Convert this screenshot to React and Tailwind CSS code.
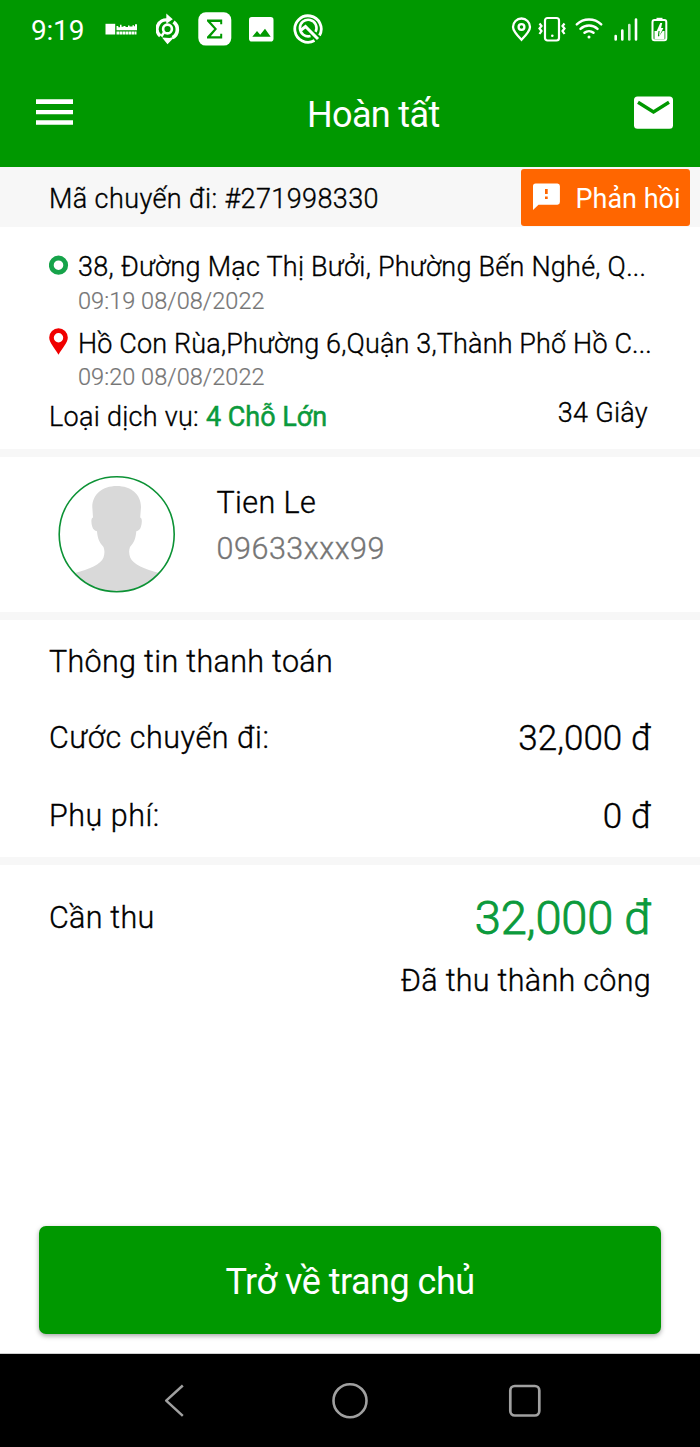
function StatusBar() {
  return (
    <div className="flex h-[60px] items-start justify-between text-white">
      <div className="flex items-start">
        <span className="ml-[31px] w-[74px] text-[28px] leading-[61px] tracking-[-0.2px]">9:19</span>
        <svg className="mt-[22px] h-4 w-8" viewBox="0 0 32 16" fill="currentColor">
          <rect x="0.5" y="1.8" width="9.7" height="10.7" />
          <path d="M11.500 8.200V4h1.800v1.200h1.700V2.800h1.500v2h2V4h2v1h2.500V3.500h1.500v1h3V3.200h1.500v1H30V2.300h2v5.900z" />
          <path d="M11.500 11h20" stroke="currentColor" strokeWidth="3.200" strokeDasharray="2.600 .4" />
        </svg>
        <svg className="mt-[12px] ml-[19px] h-[34px] w-[24px]" viewBox="0 0 24 34" fill="none" stroke="currentColor">
          <path d="M4.200 24A9.200 9.200 0 0 1 11.500 8" strokeWidth="3.400" />
          <path d="M10.300 1.500l6.500 5.700-6.500 4.600z" fill="currentColor" stroke="none" />
          <path d="M17.500 10a9.200 9.200 0 0 1-1 15.600" strokeWidth="3.600" />
          <path d="M6 25.500l5.500 6.800 7.500-7.800-5.500 1.500z" fill="currentColor" stroke="none" />
          <circle cx="11.500" cy="17" r="4.400" strokeWidth="2.600" />
          <path d="M8.300 20l-3 4.500" strokeWidth="2.500" />
        </svg>
        <svg className="mt-[12px] ml-[18px] h-[34px] w-[34px]" viewBox="0 0 34 34">
          <rect x="0.300" y="0.300" width="33" height="33.300" rx="7.500" fill="currentColor" />
          <path d="M9 7.500h15.200v4.800h-2V9.900h-9.400l6.200 7.100-6.200 7.200h9.400v-2.400h2v4.800H9v-1.900l7.200-7.700L9 9.300z" fill="#009800" />
        </svg>
        <svg className="mt-[17px] ml-[17px] h-[25px] w-[25px]" viewBox="0 0 25 25">
          <rect width="24.500" height="24.500" rx="2.800" fill="currentColor" />
          <path d="M3.300 19.800l4.700-5.800 3.200 3.800 4.800-6 5.700 8z" fill="#009800" />
        </svg>
        <svg className="mt-[14px] ml-[19px] h-[30px] w-[30px]" viewBox="0 0 30 30" fill="none" stroke="currentColor">
          <path d="M21.500 26.500A13.200 13.200 0 1 1 26.500 21.500" strokeWidth="2.800" />
          <path d="M17.500 22A8.300 8.300 0 1 1 22.600 17.800" strokeWidth="2.600" />
          <path d="M7.500 16.500l5-4 12.500 12.500" strokeWidth="3" />
        </svg>
      </div>
      <div className="flex items-start pr-[32px]">
        <svg className="mt-[17px] h-[25px] w-[21px]" viewBox="0 0 21 25" fill="none" stroke="currentColor" strokeWidth="2.300">
          <path d="M10.500 22.800C5.800 18 2 14 2 10a8.500 8.500 0 0 1 17 0c0 4-3.800 8-8.500 12.800z" />
          <circle cx="10.500" cy="10" r="2.900" />
        </svg>
        <svg className="mt-[16px] ml-[6px] h-[26px] w-[28px]" viewBox="0 0 28 26" fill="none" stroke="currentColor" strokeWidth="2.200">
          <rect x="7" y="2" width="14" height="22.500" rx="2.500" />
          <path d="M1.500 7.500l2 2.500-2 2.500 2 2.500-2 3M26.500 7.500l-2 2.500 2 2.500-2 2.500 2 3" />
          <circle cx="14.300" cy="19.800" r="1.300" fill="currentColor" stroke="none" />
        </svg>
        <svg className="mt-[17px] ml-[9px] h-[23px] w-[28px]" viewBox="0 0 28 23" fill="none" stroke="currentColor" strokeWidth="2.500" strokeLinecap="round">
          <path d="M1.800 7.300a17.800 17.800 0 0 1 24.400 0M5.500 11.800a12.500 12.500 0 0 1 17 0M9.500 15.800a7 7 0 0 1 9 0" />
          <circle cx="14" cy="20" r="1.500" fill="currentColor" stroke="none" />
        </svg>
        <svg className="mt-[17px] ml-[11px] h-[25px] w-[24px]" viewBox="0 0 24 25" fill="none" stroke="currentColor" strokeWidth="2.600" strokeLinecap="round">
          <path d="M1.700 19v3.500M8.300 13.500v9M22 2.500v20" />
          <path d="M15.300 8v14.500" opacity=".8" />
        </svg>
        <svg className="mt-[17px] ml-[13px] h-[25px] w-[17px]" viewBox="0 0 17 25">
          <path d="M5.500 0.800h6v2h-6z" fill="currentColor" />
          <rect x="1.500" y="2.900" width="13.800" height="20.300" rx="2" fill="none" stroke="currentColor" strokeWidth="2" />
          <path d="M9.300 6h1.900l-1.100 5h2.300L8 19.500l.6-5.500H5.700z" fill="currentColor" />
          <path d="M3.500 14h4l-.6 5 1 .6 3.800-5.600h1.800v8h-10z" fill="currentColor" />
        </svg>
      </div>
    </div>
  );
}

function Header() {
  return (
    <div className="flex h-[107px] items-start text-white">
      <svg className="mt-[39px] ml-[36px] h-[27px] w-[37px]" viewBox="0 0 37 27" fill="currentColor">
        <path d="M0 0.200h37v4.800H0zM0 11h37v4.300H0zM0 21.300h37v4.400H0z" />
      </svg>
      <h1 className="ml-[234px] w-[327px] text-[36px] leading-[111px] tracking-[-0.65px]">Hoàn tất</h1>
      <svg className="mt-[36px] h-[33px] w-[39px]" viewBox="0 0 39 33">
        <rect y="0.500" width="39" height="32.300" rx="3.500" fill="currentColor" />
        <path d="M4 6.300L19.500 16 35 6.300" fill="none" stroke="#009800" strokeWidth="3.400" />
      </svg>
    </div>
  );
}

function TripBar() {
  return (
    <div className="flex h-[60px] items-start justify-between bg-[#f7f7f7] pr-[10px] pl-[49px]">
      <span className="text-[27px] leading-[65px] font-light tracking-[0.4px] [-webkit-text-stroke:0.35px]">
        Mã chuyến đi: #271998330
      </span>
      <button className="mt-[2px] flex h-[56.500px] w-[169px] items-start rounded-[3px] bg-[#ff6600] pl-[12px] text-white">
        <svg className="mt-[14px] h-[27px] w-[27px]" viewBox="0 0 27 27">
          <path d="M2.600 0.500h21.800a2.600 2.600 0 0 1 2.500 2.600v16a2.600 2.600 0 0 1-2.500 2.600H5.500L0 27V3.100A2.600 2.600 0 0 1 2.600 0.500z" fill="currentColor" />
          <path d="M12 6h2.700v5H12zM12 13.500h2.700V16H12z" fill="#ff6600" />
        </svg>
        <span className="ml-[15.500px] text-[27px] leading-[61px]">Phản hồi</span>
      </button>
    </div>
  );
}

function Stop({ icon, address, time, tracking }) {
  return (
    <div className="flex items-start">
      <div className="w-[29px] shrink-0">{icon}</div>
      <div className="font-light">
        <div className={`h-[38px] text-[27px] whitespace-nowrap [-webkit-text-stroke:0.35px] ${tracking}`}>
          {address}
        </div>
        <div className="h-[31px] text-[23.500px] leading-[31px] tracking-[0.05px] text-[#757575] [-webkit-text-stroke:0.2px]">
          {time}
        </div>
      </div>
    </div>
  );
}

function Divider() {
  return <div className="h-2 shrink-0 bg-[#f7f7f7]" />;
}

function Trip() {
  return (
    <section className="flex h-[222px] flex-col pt-[21px] pr-[52px] pl-[49px]">
      <Stop
        address="38, Đường Mạc Thị Bưởi, Phường Bến Nghé, Q..."
        time="09:19 08/08/2022"
        tracking="leading-[39px] tracking-[0.25px]"
        icon={
          <svg className="mt-[7px] h-5 w-5" viewBox="0 0 20 20">
            <circle cx="9.500" cy="10.200" r="7.200" fill="none" stroke="#16a34a" strokeWidth="4.800" />
          </svg>
        }
      />
      <div className="h-[7px]" />
      <Stop
        address="Hồ Con Rùa,Phường 6,Quận 3,Thành Phố Hồ C..."
        time="09:20 08/08/2022"
        tracking="leading-[40px] tracking-[0.15px]"
        icon={
          <svg className="mt-[4px] h-[27px] w-5" viewBox="0 0 20 27">
            <path fillRule="evenodd" d="M9.500 0.300a9.300 9.300 0 0 1 9.300 9.300c0 5.500-5.500 10.400-9.300 17.200C5.700 20 .2 15.100.2 9.600A9.300 9.300 0 0 1 9.500.3zm0 4.700a4.700 4.700 0 1 0 0 9.400 4.700 4.700 0 0 0 0-9.400z" fill="#f00000" />
          </svg>
        }
      />
      <div className="mt-[5px] flex items-start justify-between text-[27px] font-light [-webkit-text-stroke:0.35px]">
        <div className="leading-[39px]">
          <span className="tracking-[0.28px]">Loại dịch vụ: </span>
          <span className="font-normal text-[#0b9a3c] [-webkit-text-stroke:0.5px]">4 Chỗ Lớn</span>
        </div>
        <div className="leading-[30px] tracking-[0.3px]">34 Giây</div>
      </div>
    </section>
  );
}

function Passenger() {
  return (
    <section className="flex h-[155px] items-start pl-[58px]">
      <svg className="mt-[18px] h-[118px] w-[118px]" viewBox="0 0 118 118">
        <defs>
          <clipPath id="avatar">
            <circle cx="58.700" cy="59.200" r="57.500" />
          </clipPath>
        </defs>
        <path
          clipPath="url(#avatar)"
          fill="#d9d9d9"
          d="M58.700 11C73 11 83 19.500 83 32l-.8 10.500c2.300.7 1.800 5.500.8 9-.8 2.800-2.500 4.500-4.700 4.800-.5 7-2.300 11.500-6.300 15.700-1.500 4-.8 7.500.2 10.500C75 89.500 87 94 101 98v22H17V98c14-4 26-8.500 28.500-15.500 1-3 1.500-6.500 0-10.500-4-4.200-6-8.700-6.500-15.700-2.200-.3-4-2-4.800-4.800-1-3.500-1.500-8.300.8-9L34.300 32C34.300 19.500 44.500 11 58.700 11z"
        />
        <circle cx="58.700" cy="59.200" r="57.500" fill="none" stroke="#0c9235" strokeWidth="1.600" />
      </svg>
      <div className="mt-[23px] ml-[40.500px] text-[30.500px] leading-[46px] font-light [-webkit-text-stroke:0.35px]">
        <div className="tracking-[0.4px]">Tien Le</div>
        <div className="tracking-[0.55px] text-[#757575]">09633xxx99</div>
      </div>
    </section>
  );
}

function Payment() {
  return (
    <section className="flex h-[237px] flex-col pr-[49px] pl-[49px] text-[30.500px] font-light [-webkit-text-stroke:0.35px]">
      <div className="mt-[20px] leading-[44px] tracking-[0.32px]">Thông tin thanh toán</div>
      <div className="mt-[30px] flex h-[48px] items-start justify-between">
        <span className="leading-[47px] tracking-[0.55px]">Cước chuyến đi:</span>
        <span className="text-[35px] leading-[50px] tracking-[0.05px]">32,000 đ</span>
      </div>
      <div className="mt-[30px] flex h-[48px] items-start justify-between">
        <span className="leading-[48px] tracking-[0.5px]">Phụ phí:</span>
        <span className="text-[35px] leading-[50px] tracking-[0.05px]">0 đ</span>
      </div>
    </section>
  );
}

function Total() {
  return (
    <section className="flex h-[360px] flex-col pr-[49px] pl-[49px] text-[30.500px] font-light [-webkit-text-stroke:0.35px]">
      <div className="mt-[23px] flex h-[60px] items-start justify-between">
        <span className="leading-[60px] tracking-[0.25px]">Cần thu</span>
        <span className="text-[47px] leading-[60px] tracking-[-0.2px] text-[#0b9a3c] [-webkit-text-stroke:0.9px]">32,000 đ</span>
      </div>
      <div className="mt-[9px] text-right leading-[47px] tracking-[0.3px]">Đã thu thành công</div>
    </section>
  );
}

function NavBar() {
  return (
    <nav className="flex h-[94px] items-start border-t border-[#cfcfcf] bg-black text-[#a0a0a0]">
      <svg className="mt-[30px] ml-[164px] h-[34px] w-5" viewBox="0 0 20 34" fill="none" stroke="currentColor" strokeWidth="2.500">
        <path d="M18.800 1.500L2.200 16.700l16.600 15.200" strokeLinejoin="round" />
      </svg>
      <svg className="mt-[28px] ml-[147px] h-[38px] w-[38px]" viewBox="0 0 38 38" fill="none" stroke="currentColor" strokeWidth="2.600">
        <circle cx="19" cy="18.700" r="16.500" />
      </svg>
      <svg className="mt-[29px] ml-[139px] h-[36px] w-[34px]" viewBox="0 0 34 36" fill="none" stroke="currentColor" strokeWidth="2.700">
        <rect x="2.300" y="3" width="29" height="29.500" rx="4.500" />
      </svg>
    </nav>
  );
}

export default function App() {
  return (
    <div className="flex h-[1447px] w-[700px] flex-col overflow-hidden bg-white font-[Roboto,sans-serif] text-black">
      <header className="bg-[#009800]">
        <StatusBar />
        <Header />
      </header>
      <TripBar />
      <Trip />
      <Divider />
      <Passenger />
      <Divider />
      <Payment />
      <Divider />
      <Total />
      <div className="h-[128px] px-[39px] pt-[0.500px]">
        <button className="block h-[108.500px] w-full rounded-[7px] bg-[#009800] text-center text-[36px] leading-[112px] tracking-[-0.5px] text-white shadow-[0_2px_5px_rgba(0,0,0,0.35)]">
          Trở về trang chủ
        </button>
      </div>
      <NavBar />
    </div>
  );
}
